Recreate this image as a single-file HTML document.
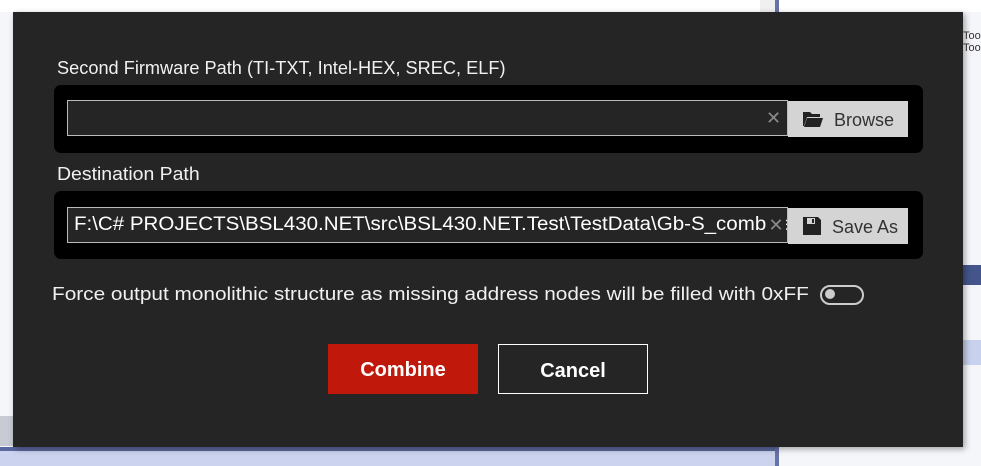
<!DOCTYPE html>
<html><head><style>
body{margin:0;width:981px;height:466px;background:#f5f6fa;position:relative;overflow:hidden;font-family:"Liberation Sans",sans-serif}
.a{position:absolute}
.lbl{color:#f0f0f0;font-size:18px;transform-origin:0 0;white-space:nowrap}
.panel{background:#000;border-radius:7px;left:54px;width:869px;height:68px}
.inp{left:13px;width:713px;height:34px;border:1px solid #bbb;background:#252525;color:#fff;font-size:19px;line-height:34px;overflow:hidden;white-space:nowrap;padding-left:6px;box-sizing:content-box}
.x{left:712px;color:#8a8a8a;font-size:18px;line-height:34px}
.btn{left:734px;width:120px;height:36px;background:#d4d4d4;color:#333;font-size:18px;line-height:38px}
</style></head><body>
<div class="a" style="left:0;top:0;width:981px;height:12px;background:#fff"></div>
<div class="a" style="left:760px;top:0;width:18px;height:30px;background:#f0f0f0"></div>
<div class="a" style="left:775px;top:0;width:4px;height:466px;background:#6672a8"></div>
<div class="a" style="left:963px;top:30px;width:18px;height:30px;font-size:11px;color:#333">Too<br>Too</div>
<div class="a" style="left:963px;top:265px;width:18px;height:20px;background:#44558c"></div>
<div class="a" style="left:963px;top:340px;width:18px;height:25px;background:#c8d2ee"></div>
<div class="a" style="left:0;top:416px;width:13px;height:30px;background:#c8cad4"></div>
<div class="a" style="left:0;top:447px;width:775px;height:19px;background:#cbd3ee"></div>
<div class="a" style="left:0;top:447px;width:775px;height:4px;background:#5b68a0"></div>
<div class="a" style="left:13px;top:12px;width:950px;height:435px;background:#252525;box-shadow:2px 2px 6px rgba(0,0,0,.35)"></div>
<div class="a lbl" style="left:57px;top:58px;transform:scaleX(1.01)">Second Firmware Path (TI-TXT, Intel-HEX, SREC, ELF)</div>
<div class="a panel" style="top:85px">
 <div class="a inp" style="top:15px"></div>
 <div class="a x" style="top:16px">✕</div>
 <div class="a btn" style="top:16px"><svg class="a" style="left:15px;top:10px" width="20" height="16" viewBox="0 0 20 16"><path d="M0 1h7l2 2h8v3H4L1 15H0z M4 7h16l-3 9H1z" fill="#222"/></svg><span class="a" style="left:46px">Browse</span></div>
</div>
<div class="a lbl" style="left:57px;top:164px;transform:scaleX(1.08)">Destination Path</div>
<div class="a panel" style="top:191px">
 <div class="a inp" style="top:16px"><span style="display:inline-block;transform:scaleX(1.08);transform-origin:0 0">F:\C# PROJECTS\BSL430.NET\src\BSL430.NET.Test\TestData\Gb-S_combined</span></div>
 <div class="a x" style="top:17px;background:#252525;width:20px;text-align:center;left:712px">✕</div>
 <div class="a btn" style="top:17px"><svg class="a" style="left:14px;top:8px" width="20" height="20" viewBox="0 0 20 20"><path d="M1 1h15l3 3v15H1z" fill="#222"/><rect x="5" y="2" width="8" height="6" fill="#d4d4d4"/><rect x="10" y="3" width="2" height="4" fill="#222"/></svg><span class="a" style="left:44px">Save As</span></div>
</div>
<div class="a lbl" style="left:52px;top:284px;transform:scaleX(1.155)">Force output monolithic structure as missing address nodes will be filled with 0xFF</div>
<div class="a" style="left:820px;top:285px;width:40px;height:16px;border:2px solid #ccc;border-radius:10px"></div>
<div class="a" style="left:825px;top:289px;width:10px;height:10px;border-radius:50%;background:#ccc"></div>
<div class="a" style="left:328px;top:344px;width:150px;height:50px;background:#c0180a;color:#fff;font-weight:bold;font-size:20px;text-align:center;line-height:52px">Combine</div>
<div class="a" style="left:498px;top:344px;width:148px;height:48px;border:1px solid #fff;color:#fff;font-weight:bold;font-size:20px;text-align:center;line-height:52px">Cancel</div>
</body></html>
